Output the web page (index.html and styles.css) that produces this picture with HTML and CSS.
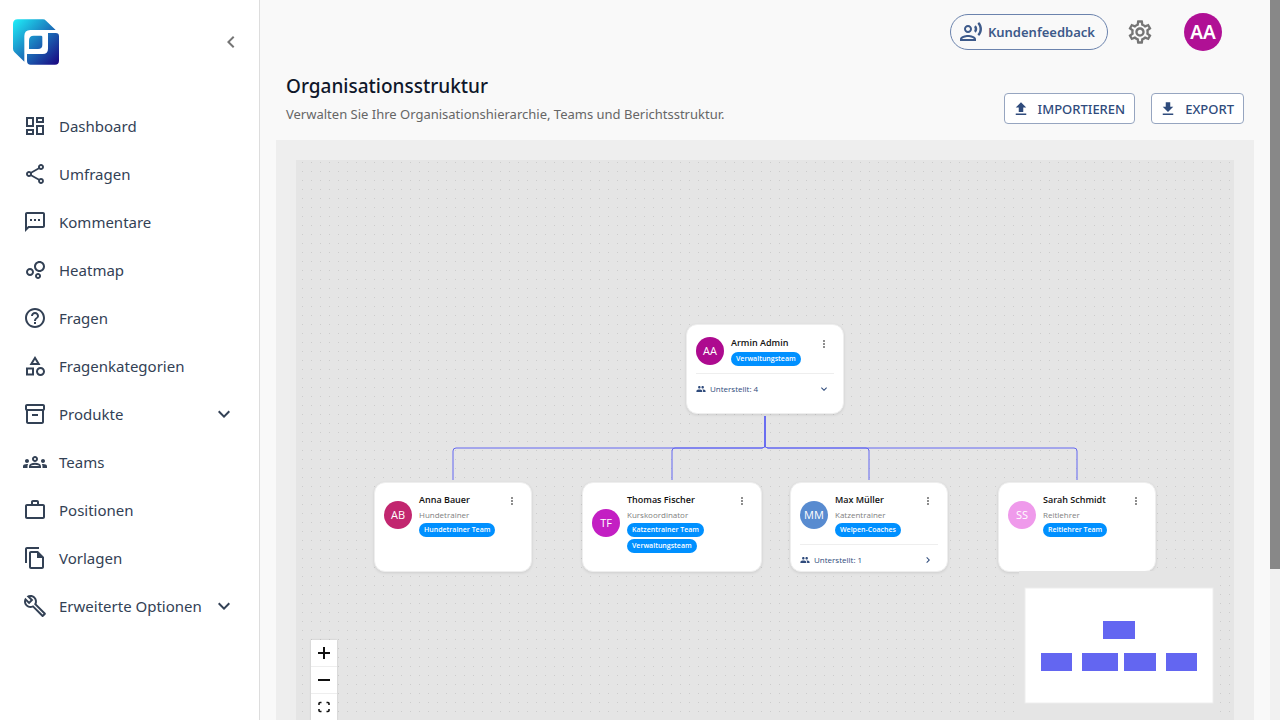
FILE: index.html
```
<!DOCTYPE html>
<html lang="de">
<head>
  <meta charset="UTF-8" />
  <meta name="viewport" content="width=device-width, initial-scale=1.0"/>
  <title>Organisationsstruktur</title>
  <link rel="stylesheet" href="styles.css">
</head>
<body>

  <!-- Icons -->
  <svg class="sprite" aria-hidden="true">
    <symbol id="i-dashboard" viewBox="0 0 24 24"><path d="M19 5v2h-4V5h4M9 5v6H5V5h4m10 8v6h-4v-6h4M9 17v2H5v-2h4M21 3h-8v6h8V3zM11 3H3v10h8V3zm10 8h-8v10h8V11zm-10 4H3v6h8v-6z"/></symbol>
    <symbol id="i-share" viewBox="0 0 24 24"><path d="M18 16.08c-.76 0-1.44.3-1.96.77L8.91 12.7c.05-.23.09-.46.09-.7s-.04-.47-.09-.7l7.05-4.11c.54.5 1.25.81 2.04.81 1.66 0 3-1.34 3-3s-1.34-3-3-3-3 1.34-3 3c0 .24.04.47.09.7L8.04 9.81C7.5 9.31 6.79 9 6 9c-1.66 0-3 1.34-3 3s1.34 3 3 3c.79 0 1.5-.31 2.04-.81l7.12 4.16c-.05.21-.08.43-.08.65 0 1.61 1.31 2.92 2.92 2.92s2.92-1.31 2.92-2.92c0-1.61-1.31-2.92-2.92-2.92zM18 4c.55 0 1 .45 1 1s-.45 1-1 1-1-.45-1-1 .45-1 1-1zM6 13c-.55 0-1-.45-1-1s.45-1 1-1 1 .45 1 1-.45 1-1 1zm12 7.02c-.55 0-1-.45-1-1s.45-1 1-1 1 .45 1 1-.45 1-1 1z"/></symbol>
    <symbol id="i-sms" viewBox="0 0 24 24"><path d="M20 2H4c-1.1 0-2 .9-2 2v18l4-4h14c1.1 0 2-.9 2-2V4c0-1.1-.9-2-2-2zm0 14H5.17L4 17.17V4h16v12zM7 9h2v2H7zm4 0h2v2h-2zm4 0h2v2h-2z"/></symbol>
    <symbol id="i-bubble" viewBox="0 0 24 24"><path d="M7 10c-2.21 0-4 1.79-4 4s1.79 4 4 4 4-1.79 4-4-1.79-4-4-4zm0 6c-1.1 0-2-.9-2-2s.9-2 2-2 2 .9 2 2-.9 2-2 2zm8.01-1c-1.65 0-3 1.35-3 3s1.35 3 3 3 3-1.35 3-3-1.35-3-3-3zm0 4c-.55 0-1-.45-1-1s.45-1 1-1 1 .45 1 1-.45 1-1 1zM16.5 3C13.47 3 11 5.47 11 8.5s2.47 5.5 5.5 5.5S22 11.53 22 8.5 19.53 3 16.5 3zm0 9c-1.93 0-3.5-1.57-3.5-3.5S14.57 5 16.5 5 20 6.57 20 8.5 18.43 12 16.5 12z"/></symbol>
    <symbol id="i-help" viewBox="0 0 24 24"><path d="M11 18h2v-2h-2v2zm1-16C6.48 2 2 6.48 2 12s4.48 10 10 10 10-4.48 10-10S17.52 2 12 2zm0 18c-4.41 0-8-3.59-8-8s3.59-8 8-8 8 3.59 8 8-3.59 8-8 8zm0-14c-2.21 0-4 1.79-4 4h2c0-1.1.9-2 2-2s2 .9 2 2c0 2-3 1.75-3 5h2c0-2.25 3-2.5 3-5 0-2.21-1.79-4-4-4z"/></symbol>
    <symbol id="i-category" viewBox="0 0 24 24"><path d="m12 2-5.5 9h11L12 2zm0 3.84L13.93 9h-3.87L12 5.84zM17.5 13c-2.49 0-4.5 2.01-4.5 4.5s2.01 4.5 4.5 4.5 4.5-2.01 4.5-4.5-2.01-4.5-4.5-4.5zm0 7c-1.38 0-2.5-1.12-2.5-2.5s1.12-2.5 2.5-2.5 2.5 1.12 2.5 2.5-1.12 2.5-2.5 2.5zM3 21.5h8v-8H3v8zm2-6h4v4H5v-4z"/></symbol>
    <symbol id="i-inventory" viewBox="0 0 24 24"><path d="M20 2H4c-1 0-2 .9-2 2v3.01c0 .72.43 1.34 1 1.69V20c0 1.1 1.1 2 2 2h14c.9 0 2-.9 2-2V8.7c.57-.35 1-.97 1-1.69V4c0-1.1-1-2-2-2zm-1 18H5V9h14v11zm1-13H4V4h16v3zM9 12h6v2H9z"/></symbol>
    <symbol id="i-groups" viewBox="0 0 24 24"><path d="M4 13c1.1 0 2-.9 2-2s-.9-2-2-2-2 .9-2 2 .9 2 2 2zm1.13 1.1c-.37-.06-.74-.1-1.13-.1-.99 0-1.93.21-2.78.58C.48 14.9 0 15.62 0 16.43V18h4.5v-1.61c0-.83.23-1.61.63-2.29zM20 13c1.1 0 2-.9 2-2s-.9-2-2-2-2 .9-2 2 .9 2 2 2zm4 3.43c0-.81-.48-1.53-1.22-1.85-.85-.37-1.79-.58-2.78-.58-.39 0-.76.04-1.13.1.4.68.63 1.46.63 2.29V18H24v-1.57zm-7.76-2.78c-1.17-.52-2.61-.9-4.24-.9-1.63 0-3.07.39-4.24.9C6.68 14.13 6 15.21 6 16.39V18h12v-1.61c0-1.18-.68-2.26-1.76-2.74zM8.07 16c.09-.23.13-.39.91-.69.97-.38 1.99-.56 3.02-.56s2.05.18 3.02.56c.77.3.81.46.91.69H8.07zM12 8c.55 0 1 .45 1 1s-.45 1-1 1-1-.45-1-1 .45-1 1-1m0-2c-1.66 0-3 1.34-3 3s1.34 3 3 3 3-1.34 3-3-1.34-3-3-3z"/></symbol>
    <symbol id="i-work" viewBox="0 0 24 24"><path d="M14 6V4h-4v2h4zM4 8v11h16V8H4zm16-2c1.11 0 2 .89 2 2v11c0 1.11-.89 2-2 2H4c-1.11 0-2-.89-2-2l.01-11c0-1.11.88-2 1.99-2h4V4c0-1.11.89-2 2-2h4c1.11 0 2 .89 2 2v2h4z" fill-rule="evenodd"/></symbol>
    <symbol id="i-copy" viewBox="0 0 24 24"><path d="M16 1H4c-1.1 0-2 .9-2 2v14h2V3h12V1zm-1 4H8c-1.1 0-1.99.9-1.99 2L6 21c0 1.1.89 2 1.99 2H19c1.1 0 2-.9 2-2V11l-6-6zM8 21V7h6v5h5v9H8z"/></symbol>
    <symbol id="i-build" viewBox="0 0 24 24"><path d="m22.61 18.99-9.08-9.08c.93-2.34.45-5.1-1.44-7C9.79.61 6.21.4 3.66 2.26L7.5 6.11 6.08 7.52 2.25 3.69C.39 6.23.6 9.82 2.9 12.11c1.86 1.86 4.57 2.35 6.89 1.48l9.11 9.11c.39.39 1.02.39 1.41 0l2.3-2.3c.4-.38.4-1.01 0-1.41zm-3 1.6-9.46-9.46c-.61.45-1.29.72-2 .82-1.36.2-2.79-.21-3.83-1.25C3.37 9.76 2.93 8.5 3 7.26l3.09 3.09 4.24-4.24-3.09-3.09c1.24-.07 2.49.37 3.44 1.31 1.08 1.08 1.49 2.57 1.24 3.96-.12.71-.42 1.37-.88 1.96l9.45 9.45-.88.89z"/></symbol>
    <symbol id="i-down" viewBox="0 0 24 24"><path d="M16.59 8.59 12 13.17 7.41 8.59 6 10l6 6 6-6z"/></symbol>
    <symbol id="i-left" viewBox="0 0 24 24"><path d="M15.41 7.41 14 6l-6 6 6 6 1.41-1.41L10.83 12z"/></symbol>
    <symbol id="i-right" viewBox="0 0 24 24"><path d="M10 6 8.59 7.41 13.17 12l-4.58 4.59L10 18l6-6z"/></symbol>
    <symbol id="i-more" viewBox="0 0 24 24"><path d="M12 8c1.1 0 2-.9 2-2s-.9-2-2-2-2 .9-2 2 .9 2 2 2zm0 2c-1.1 0-2 .9-2 2s.9 2 2 2 2-.9 2-2-.9-2-2-2zm0 6c-1.1 0-2 .9-2 2s.9 2 2 2 2-.9 2-2-.9-2-2-2z"/></symbol>
    <symbol id="i-people" viewBox="0 0 24 24"><path d="M16 11c1.66 0 2.99-1.34 2.99-3S17.66 5 16 5c-1.66 0-3 1.34-3 3s1.34 3 3 3zm-8 0c1.66 0 2.99-1.34 2.99-3S9.66 5 8 5C6.34 5 5 6.34 5 8s1.34 3 3 3zm0 2c-2.33 0-7 1.17-7 3.5V19h14v-2.5c0-2.33-4.67-3.5-7-3.5zm8 0c-.29 0-.62.02-.97.05 1.16.84 1.97 1.97 1.97 3.45V19h6v-2.5c0-2.33-4.67-3.5-7-3.5z"/></symbol>
    <symbol id="i-upload" viewBox="0 0 24 24"><path d="M5 20h14v-2H5v2zm0-10h4v6h6v-6h4l-7-7-7 7z"/></symbol>
    <symbol id="i-download" viewBox="0 0 24 24"><path d="M5 20h14v-2H5v2zM19 9h-4V3H9v6H5l7 7 7-7z"/></symbol>
    <symbol id="i-voice" viewBox="0 0 24 24"><path d="M9 13c2.21 0 4-1.79 4-4s-1.79-4-4-4-4 1.79-4 4 1.79 4 4 4zm0-6c1.1 0 2 .9 2 2s-.9 2-2 2-2-.9-2-2 .9-2 2-2zm0 8c-2.67 0-8 1.34-8 4v2h16v-2c0-2.66-5.33-4-8-4zm-6 4c.22-.72 3.31-2 6-2 2.7 0 5.8 1.29 6 2H3zM15.08 7.05c.84 1.18.84 2.71 0 3.89l1.68 1.69c2.02-2.02 2.02-5.07 0-7.27l-1.68 1.69zM20.07 2l-1.63 1.63c2.77 3.02 2.77 7.56 0 10.74L20.07 16c3.9-3.89 3.91-9.95 0-14z"/></symbol>
    <symbol id="i-settings" viewBox="0 0 24 24"><path d="M19.43 12.98c.04-.32.07-.64.07-.98 0-.34-.03-.66-.07-.98l2.11-1.65c.19-.15.24-.42.12-.64l-2-3.46c-.09-.16-.26-.25-.44-.25-.06 0-.12.01-.17.03l-2.49 1c-.52-.4-1.08-.73-1.69-.98l-.38-2.65C14.46 2.18 14.25 2 14 2h-4c-.25 0-.46.18-.49.42l-.38 2.65c-.61.25-1.17.59-1.69.98l-2.49-1c-.06-.02-.12-.03-.18-.03-.17 0-.34.09-.43.25l-2 3.46c-.13.22-.07.49.12.64l2.11 1.65c-.04.32-.07.65-.07.98 0 .33.03.66.07.98l-2.11 1.65c-.19.15-.24.42-.12.64l2 3.46c.09.16.26.25.44.25.06 0 .12-.01.17-.03l2.49-1c.52.4 1.08.73 1.69.98l.38 2.65c.03.24.24.42.49.42h4c.25 0 .46-.18.49-.42l.38-2.65c.61-.25 1.17-.59 1.69-.98l2.49 1c.06.02.12.03.18.03.17 0 .34-.09.43-.25l2-3.46c.12-.22.07-.49-.12-.64l-2.11-1.65zm-1.98-1.71c.04.31.05.52.05.73 0 .21-.02.43-.05.73l-.14 1.13.89.7 1.08.84-.7 1.21-1.27-.51-1.04-.42-.9.68c-.43.32-.84.56-1.25.73l-1.06.43-.16 1.13-.2 1.35h-1.4l-.19-1.35-.16-1.13-1.06-.43c-.43-.18-.83-.41-1.23-.71l-.91-.7-1.06.43-1.27.51-.7-1.21 1.08-.84.89-.7-.14-1.13c-.03-.31-.05-.54-.05-.74s.02-.43.05-.73l.14-1.13-.89-.7-1.08-.84.7-1.21 1.27.51 1.04.42.9-.68c.43-.32.84-.56 1.25-.73l1.06-.43.16-1.13.2-1.35h1.39l.19 1.35.16 1.13 1.06.43c.43.18.83.41 1.23.71l.91.7 1.06-.43 1.27-.51.7 1.21-1.07.85-.89.7.14 1.13zM12 8c-2.21 0-4 1.79-4 4s1.79 4 4 4 4-1.79 4-4-1.79-4-4-4zm0 6c-1.1 0-2-.9-2-2s.9-2 2-2 2 .9 2 2-.9 2-2 2z"/></symbol>
  </svg>

  <aside class="sidebar">
    <div class="sidebar-head">
      <a href="#" class="logo" aria-label="Startseite">
        <svg viewBox="0 0 138 136">
          <defs>
            <linearGradient id="logo-fill" gradientUnits="userSpaceOnUse" x1="4" y1="4" x2="134" y2="132">
              <stop offset="0" stop-color="#1ee9f6"/>
              <stop offset="0.5" stop-color="#1b78bd"/>
              <stop offset="1" stop-color="#1a0a83"/>
            </linearGradient>
          </defs>
          <g fill="url(#logo-fill)">
            <path d="M14 0H90Q95 0 99 4L128 32H52Q34 32 34 50V127L4 98Q0 94 0 88V14Q0 0 14 0Z"/>
            <path d="M105 41H128Q138 41 138 51V124Q138 136 126 136H53Q42 136 42 125V104H89Q105 104 105 88Z"/>
            <path d="M62 49H84Q88 49 88 53V76Q88 89 75 89H48V63Q48 49 62 49Z"/>
          </g>
        </svg>
      </a>
      <button class="icon-btn collapse" aria-label="Menü einklappen"><svg class="icon"><use href="#i-left"/></svg></button>
    </div>

    <nav class="menu">
      <a href="#"><svg class="icon"><use href="#i-dashboard"/></svg><span>Dashboard</span></a>
      <a href="#"><svg class="icon"><use href="#i-share"/></svg><span>Umfragen</span></a>
      <a href="#"><svg class="icon"><use href="#i-sms"/></svg><span>Kommentare</span></a>
      <a href="#"><svg class="icon"><use href="#i-bubble"/></svg><span>Heatmap</span></a>
      <a href="#"><svg class="icon"><use href="#i-help"/></svg><span>Fragen</span></a>
      <a href="#"><svg class="icon"><use href="#i-category"/></svg><span>Fragenkategorien</span></a>
      <a href="#"><svg class="icon"><use href="#i-inventory"/></svg><span>Produkte</span><svg class="icon arrow"><use href="#i-down"/></svg></a>
      <a href="#"><svg class="icon"><use href="#i-groups"/></svg><span>Teams</span></a>
      <a href="#"><svg class="icon"><use href="#i-work"/></svg><span>Positionen</span></a>
      <a href="#"><svg class="icon"><use href="#i-copy"/></svg><span>Vorlagen</span></a>
      <a href="#"><svg class="icon"><use href="#i-build"/></svg><span>Erweiterte Optionen</span><svg class="icon arrow"><use href="#i-down"/></svg></a>
    </nav>
  </aside>

  <main class="main">
    <header class="topbar">
      <button class="feedback"><svg class="icon"><use href="#i-voice"/></svg>Kundenfeedback</button>
      <button class="icon-btn settings" aria-label="Einstellungen"><svg class="icon"><use href="#i-settings"/></svg></button>
      <button class="user">AA</button>
    </header>

    <section class="page-head">
      <div>
        <h1>Organisationsstruktur</h1>
        <p>Verwalten Sie Ihre Organisationshierarchie, Teams und Berichtsstruktur.</p>
      </div>
      <div class="actions">
        <button class="outlined"><svg class="icon"><use href="#i-upload"/></svg>IMPORTIEREN</button>
        <button class="outlined"><svg class="icon"><use href="#i-download"/></svg>EXPORT</button>
      </div>
    </section>

    <section class="canvas-wrap">
      <div class="canvas">
        <div class="tree">
          <svg class="edges" viewBox="0 0 782 248">
            <path d="M391 92V121Q391 124 388 124H82Q79 124 79 127V156"/>
            <path d="M391 92V121Q391 124 388 124H301Q298 124 298 127V156"/>
            <path d="M391 92V121Q391 124 394 124H492Q495 124 495 127V156"/>
            <path d="M391 92V121Q391 124 394 124H700Q703 124 703 127V156"/>
          </svg>

          <article class="node root">
            <div class="person">
              <span class="avatar purple">AA</span>
              <div class="info">
                <h2>Armin Admin</h2>
                <span class="chip">Verwaltungsteam</span>
              </div>
              <button class="icon-btn more" aria-label="Mehr"><svg class="icon"><use href="#i-more"/></svg></button>
            </div>
            <button class="reports"><svg class="icon"><use href="#i-people"/></svg><span>Unterstellt: 4</span><svg class="icon toggle"><use href="#i-down"/></svg></button>
          </article>

          <article class="node anna">
            <div class="person">
              <span class="avatar berry">AB</span>
              <div class="info">
                <h2>Anna Bauer</h2>
                <p>Hundetrainer</p>
                <span class="chip">Hundetrainer Team</span>
              </div>
              <button class="icon-btn more" aria-label="Mehr"><svg class="icon"><use href="#i-more"/></svg></button>
            </div>
          </article>

          <article class="node thomas">
            <div class="person">
              <span class="avatar magenta">TF</span>
              <div class="info">
                <h2>Thomas Fischer</h2>
                <p>Kurskoordinator</p>
                <span class="chip">Katzentrainer Team</span>
                <span class="chip">Verwaltungsteam</span>
              </div>
              <button class="icon-btn more" aria-label="Mehr"><svg class="icon"><use href="#i-more"/></svg></button>
            </div>
          </article>

          <article class="node max">
            <div class="person">
              <span class="avatar blue">MM</span>
              <div class="info">
                <h2>Max Müller</h2>
                <p>Katzentrainer</p>
                <span class="chip">Welpen-Coaches</span>
              </div>
              <button class="icon-btn more" aria-label="Mehr"><svg class="icon"><use href="#i-more"/></svg></button>
            </div>
            <button class="reports"><svg class="icon"><use href="#i-people"/></svg><span>Unterstellt: 1</span><svg class="icon toggle"><use href="#i-right"/></svg></button>
          </article>

          <article class="node sarah">
            <div class="person">
              <span class="avatar pink">SS</span>
              <div class="info">
                <h2>Sarah Schmidt</h2>
                <p>Reitlehrer</p>
                <span class="chip">Reitlehrer Team</span>
              </div>
              <button class="icon-btn more" aria-label="Mehr"><svg class="icon"><use href="#i-more"/></svg></button>
            </div>
          </article>
        </div>

        <div class="controls">
          <button aria-label="Vergrößern"><svg viewBox="0 0 12 12"><path d="M6 0v12M0 6h12" stroke="#111" stroke-width="2"/></svg></button>
          <button aria-label="Verkleinern"><svg viewBox="0 0 12 12"><path d="M0 6h12" stroke="#111" stroke-width="2"/></svg></button>
          <button aria-label="Einpassen"><svg viewBox="0 0 12 12"><path d="M1 4V2.5Q1 1.5 2 1.5H3.500M8.500 1.5H10Q11 1.5 11 2.5V4M11 8V9.5Q11 10.5 10 10.5H8.500M3.500 10.5H2Q1 10.5 1 9.5V8" fill="none" stroke="#111" stroke-width="1.600"/></svg></button>
        </div>

        <div class="minimap">
          <svg viewBox="0 0 200 150">
            <rect class="mini-view" x="6" y="17" width="188" height="115"/>
            <rect x="84" y="50" width="32" height="18"/>
            <rect x="22" y="82" width="31" height="18"/>
            <rect x="63" y="82" width="36" height="18"/>
            <rect x="105" y="82" width="32" height="18"/>
            <rect x="147" y="82" width="31" height="18"/>
          </svg>
        </div>
      </div>
    </section>
  </main>

  <div class="scrollbar"><div class="thumb"></div></div>

</body>
</html>
```
FILE: styles.css
```
* {
  margin: 0;
  padding: 0;
  box-sizing: border-box;
}

body {
  font-family: "Noto Sans", "Open Sans", sans-serif;
  background-color: #f9f9f9;
  color: #334155;
  display: flex;
  height: 100vh;
  overflow: hidden;
}

button {
  font-family: inherit;
  background: none;
  border: none;
  cursor: pointer;
}

a {
  color: inherit;
  text-decoration: none;
}

.sprite {
  position: absolute;
  width: 0;
  height: 0;
}

.icon {
  width: 24px;
  height: 24px;
  fill: currentColor;
  flex: none;
}

.icon-btn {
  display: flex;
  color: #757575;
}

/* Sidebar */
.sidebar {
  width: 260px;
  flex: none;
  background-color: #fff;
  border-right: 1px solid #ddd;
}

.sidebar-head {
  display: flex;
  justify-content: space-between;
  align-items: center;
  height: 84px;
  padding: 0 16px 0 13px;
}

.logo svg {
  display: block;
  width: 46px;
  height: 46px;
}

.menu {
  padding-top: 18px;
}

.menu a {
  display: flex;
  align-items: center;
  height: 48px;
  padding: 0 23px;
  font-size: 15px;
  white-space: nowrap;
}

.menu span {
  margin-left: 12px;
}

.menu .arrow {
  margin-left: auto;
}

/* Header */
.main {
  flex: 1;
  min-width: 0;
}

.topbar {
  display: flex;
  align-items: center;
  justify-content: flex-end;
  height: 64px;
  padding-right: 48px;
}

.feedback {
  display: flex;
  align-items: center;
  gap: 5px;
  height: 36px;
  padding: 0 12px 0 8px;
  border: 1px solid #6b83ad;
  border-radius: 18px;
  color: #3d5a8a;
  font-size: 13px;
  font-weight: 600;
}

.settings {
  margin: 0 30px 0 18px;
}

.settings .icon {
  width: 28px;
  height: 28px;
}

.user {
  width: 38px;
  height: 38px;
  border-radius: 50%;
  background-color: #b01095;
  color: #fff;
  font-size: 19px;
  font-weight: 600;
}

.page-head {
  display: flex;
  justify-content: space-between;
  height: 76px;
  padding: 8px 26px 0;
}

h1 {
  font-size: 19px;
  font-weight: 500;
  line-height: 28px;
  color: #0f172a;
}

.page-head p {
  font-size: 13px;
  line-height: 28px;
  color: #666;
}

.actions {
  display: flex;
  gap: 16px;
  padding-top: 21px;
}

.outlined {
  display: flex;
  align-items: center;
  gap: 8px;
  height: 31px;
  padding: 0 9px 0 7px;
  background-color: #fff;
  border: 1px solid #96a5c0;
  border-radius: 4px;
  color: #2f4b7c;
  font-size: 13px;
  font-weight: 500;
}

.outlined .icon {
  width: 18px;
  height: 18px;
}

/* Canvas */
.canvas-wrap {
  margin: 0 16px;
  padding: 20px;
  background-color: #eee;
}

.canvas {
  position: relative;
  height: 576px;
  background-color: #e5e5e5;
  background-image: radial-gradient(circle, #ccc 0, transparent 1px);
  background-size: 9px 9px;
  background-position: 2px 7px;
  overflow: hidden;
}

.tree {
  position: absolute;
  top: 164px;
  left: 50%;
  width: 782px;
  margin-left: -391px;
  font-family: "Open Sans", "Noto Sans", sans-serif;
}

.edges {
  display: block;
  width: 782px;
  height: 248px;
  fill: none;
  stroke: #6366f1;
}

.node {
  position: absolute;
  width: 158px;
  height: 90px;
  padding: 9px;
  background-color: #fff;
  border: 1px solid #eee;
  border-radius: 11px;
  box-shadow: 0 1px 3px rgba(0, 0, 0, 0.1);
}

.root {
  top: 0;
  left: 312px;
  padding-top: 10px;
}

.anna, .thomas, .max, .sarah {
  top: 158px;
}

.anna {
  left: 0;
}

.thomas {
  left: 208px;
  width: 180px;
}

.max {
  left: 416px;
}

.sarah {
  left: 624px;
}

.person {
  display: flex;
  align-items: center;
  gap: 7px;
}

.avatar {
  width: 28px;
  height: 28px;
  border-radius: 50%;
  color: #fff;
  font-size: 11px;
  font-weight: 500;
  line-height: 28px;
  text-align: center;
  flex: none;
}

.purple {
  background-color: #ad0a8f;
}

.berry {
  background-color: #c2266f;
}

.magenta {
  background-color: #c31fc3;
}

.blue {
  background-color: #588bd0;
}

.pink {
  background-color: #ef9aeb;
}

.info {
  flex: 1;
  display: flex;
  flex-direction: column;
  align-items: flex-start;
  gap: 2px;
}

.info h2 {
  font-size: 9px;
  font-weight: 600;
  line-height: 15px;
  color: #111;
}

.info p {
  font-size: 8px;
  line-height: 12px;
  color: #808080;
}

.chip {
  height: 14px;
  padding: 0 5px;
  border-radius: 7px;
  background-color: #0090ff;
  color: #fff;
  font-size: 7px;
  font-weight: 600;
  line-height: 14px;
}

.more {
  align-self: flex-start;
  padding: 3px 4px 0 0;
}

.more .icon {
  width: 12px;
  height: 12px;
}

.reports {
  display: flex;
  align-items: center;
  gap: 4px;
  width: 100%;
  height: 30px;
  margin-top: 7px;
  border-top: 1px solid #eee;
  color: #2f4b7c;
  font-size: 8px;
  font-weight: 500;
}

.reports .icon {
  width: 10px;
  height: 10px;
}

.reports .toggle {
  width: 12px;
  height: 12px;
  margin: 0 4px 0 auto;
}

.controls {
  position: absolute;
  left: 15px;
  bottom: 15px;
  display: flex;
  flex-direction: column;
  background-color: #fff;
  box-shadow: 0 0 2px rgba(0, 0, 0, 0.15);
}

.controls button {
  display: flex;
  align-items: center;
  justify-content: center;
  width: 26px;
  height: 27px;
  border-bottom: 1px solid #eee;
}

.controls svg {
  width: 12px;
  height: 12px;
}

.minimap {
  position: absolute;
  right: 15px;
  bottom: 15px;
  width: 200px;
  height: 150px;
  background-color: #e5e5e5;
}

.minimap svg {
  display: block;
  fill: #6366f1;
}

.minimap .mini-view {
  fill: #fff;
  stroke: #eee;
}

/* Scrollbar */
.scrollbar {
  width: 10px;
  flex: none;
  background-color: #f1f1f1;
}

.thumb {
  height: 79%;
  background-color: #888;
}
```
